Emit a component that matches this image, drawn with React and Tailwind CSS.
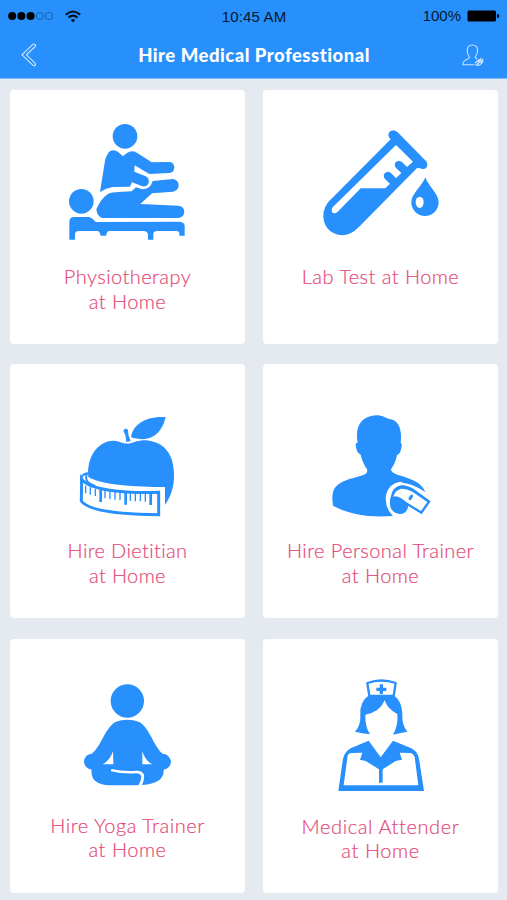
import React from "react";

function PhysioIcon() {
  return (
    <svg width="145" height="140" viewBox="0 0 435 420" fill="#2890fc">
      <circle cx="210" cy="79" r="37" />
      <circle cx="79" cy="274" r="37" />
      <path d="M158 132Q162 122 177 121Q186 121 204 139Q220 124 232 124Q240 124 248 130L290 157L343 156Q358 158 358 173Q357 187 343 189L283 192L239 166L238 185L272 199Q284 206 281 219Q277 231 262 229L231 217L225 230L173 231Q153 234 135 246L151 146Z" />
      <path d="M124 298Q138 264 160 251Q170 246 190 246L230 244L243 232L262 238Q286 238 293 213L354 207Q370 209 371 226Q370 242 354 245L291 250L256 282L371 287Q388 290 388 306Q387 322 370 324L143 324Q127 322 124 298Z" />
      <path d="M43 389V334Q44 321 58 321H101Q111 322 122 336L374 335Q388 336 389 348V377H373V368Q372 363 364 363H306Q297 363 295 371V389H279V371Q276 363 267 363H162Q156 364 153 377H137Q134 364 128 363H70Q61 364 60 371V389Z" />
    </svg>
  );
}

function LabIcon() {
  return (
    <svg width="140" height="125" viewBox="2 2 420 375" fill="#2890fc">
      <path d="M234 48Q234 34 249 33Q256 34 262 39L349 127Q354 136 348 145Q340 152 329 147L321 145L145 324Q121 348 96 348Q68 347 51 327Q38 309 39 285Q41 263 56 246L241 60Q234 54 234 48Z" />
      <path
        fill="#fff"
        d="M257 77L308 127L290 143L275 128Q264 121 256 129Q250 137 257 146L273 161L257 177L243 162Q232 153 223 162Q217 170 224 179L239 193L225 207H151L82 277Q72 286 65 278Q61 270 67 264Z"
      />
      <path d="M345 174C352 198 385 223 385 249A41 41 0 0 1 303 249C303 223 337 198 345 174Z" />
      <ellipse cx="328" cy="249" rx="12" ry="17" fill="#fff" />
    </svg>
  );
}

function DietIcon() {
  return (
    <svg width="125" height="120" viewBox="0 0 375 360" fill="#2890fc">
      <path d="M70 216C66 177 81 113 143 107C162 107 170 115 190 116C208 113 217 106 240 106C296 109 322 145 326 193C330 232 323 267 300 300V246C210 246 112 241 70 216Z" />
      <path d="M198 96C203 61 238 32 302 36C291 83 261 113 205 99Z" />
      <path d="M176 74Q183 68 189 75Q188 91 197 109L183 110Q184 91 176 81Z" />
      <path
        fill="none"
        stroke="#2890fc"
        strokeWidth="9"
        d="M50 222C70 255 175 265 281 262V329C175 328 70 318 49 288Z"
      />
      <path
        fill="none"
        stroke="#2890fc"
        strokeWidth="6"
        d="M49 235Q42 210 68 204Q61 210 65 226Q72 238 91 243"
      />
      <path
        fill="none"
        stroke="#2890fc"
        strokeWidth="8"
        d="M107 254V291M182 261V299M257 264V300"
      />
      <path
        fill="none"
        stroke="#2890fc"
        strokeWidth="4"
        d="M62 242V265M76 247V269M91 252V273M120 257V280M135 258V283M150 259V284M165 261V286M196 262V288M211 263V289M226 263V289M241 263V290"
      />
    </svg>
  );
}

function TrainerIcon() {
  return (
    <svg width="120" height="120" viewBox="0 0 360 360" fill="#2890fc">
      <path d="M110 113C101 66 119 33 167 31C184 31 191 38 205 42C231 43 244 70 239 113Q244 115 241 128Q238 147 228 150C224 171 217 182 210 193Q210 203 229 209C265 220 303 230 313 262L238 230Q203 235 195 270Q190 308 216 333C140 339 79 326 36 302Q31 269 38 255C56 222 104 221 132 208Q141 202 138 193C129 179 123 166 119 149Q107 145 104 121Q103 112 110 113Z" />
      <path
        d="M313 262Q280 238 248 234C220 231 198 253 199 285Q201 315 220 334L299 334L333 291Z"
        fill="#fff"
      />
      <path d="M209 277Q213 244 244 240Q257 241 274 249L329 289L302 328L262 303Q258 327 236 327Q209 323 207 299Q206 285 209 277Z" />
      <path
        fill="#fff"
        d="M217 275Q228 270 243 281L259 293L300 318L319 291L274 260Q255 250 240 251Q222 256 217 275Z"
      />
      <path
        fill="none"
        stroke="#2890fc"
        strokeWidth="9"
        strokeLinecap="round"
        d="M272 273L267 281"
      />
    </svg>
  );
}

function YogaIcon() {
  return (
    <svg width="115" height="120" viewBox="0 0 345 360" fill="#2890fc">
      <circle cx="172" cy="78" r="50" />
      <path d="M136 141Q172 127 208 141C239 159 251 214 278 236Q297 236 303 259Q302 280 281 284Q284 326 216 330Q224 313 222 299Q217 287 201 287Q160 290 124 282L123 289Q160 298 198 295Q211 295 214 304Q215 316 205 331H119C82 330 61 315 65 284Q44 281 42 260Q44 238 65 236C93 216 104 160 136 141Z" />
      <path
        fill="#fff"
        d="M129 229Q120 256 98 268H130ZM217 229V268H247Q225 257 217 229Z"
      />
    </svg>
  );
}

function NurseIcon() {
  return (
    <svg width="110" height="130" viewBox="2 0 330 390" fill="#2890fc">
      <path d="M129 77Q103 95 105 133Q107 168 89 185Q108 190 134 193Q119 171 120 134Q163 127 178 91Q188 119 216 132Q219 167 203 194Q222 190 246 185Q229 165 231 132Q230 94 207 77Z" />
      <path
        fill="#fff"
        stroke="#2890fc"
        strokeWidth="7"
        strokeLinejoin="round"
        d="M126 39Q168 24 211 39L205 78H132Z"
      />
      <path d="M163 43H173V53H183V63H173V72H163V63H153V53H163Z" />
      <path d="M130 212L166 262L203 212L258 235Q278 245 281 266L296 363H39L53 266Q58 245 76 235Z" />
      <path
        fill="#fff"
        d="M67 256Q71 248 82 249L111 248L104 269L121 273L161 298V338H172V298L211 273L230 269L223 248L253 249Q263 249 268 261L279 346H55Z"
      />
    </svg>
  );
}

const services = [
  { lines: ["Physiotherapy", "at Home"], icon: <PhysioIcon />, pad: "pt-5", label: "tracking-[0.43px]" },
  { lines: ["Lab Test at Home"], icon: <LabIcon />, pad: "pt-[30px]", label: "tracking-[0.45px]" },
  { lines: ["Hire Dietitian", "at Home"], icon: <DietIcon />, pad: "pt-[41px]", label: "tracking-[0.35px]" },
  { lines: ["Hire Personal Trainer", "at Home"], icon: <TrainerIcon />, pad: "pt-[41px]", label: "tracking-[0.42px]" },
  { lines: ["Hire Yoga Trainer", "at Home"], icon: <YogaIcon />, pad: "pt-9", label: "tracking-[0.55px]" },
  { lines: ["Medical Attender", "at Home"], icon: <NurseIcon />, pad: "pt-[31px]", label: "pt-px tracking-[0.6px]" },
];

function StatusBar() {
  return (
    <div className="grid h-8 grid-cols-3 items-center pl-2 pr-[7px] text-[15px] text-[#06182c]">
      <div className="flex items-center gap-[11px]">
        <svg width="46" height="10" viewBox="0 0 46 10">
          <circle cx="4.2" cy="5" r="4" fill="#000" />
          <circle cx="13.4" cy="5" r="4" fill="#000" />
          <circle cx="22.6" cy="5" r="4" fill="#000" />
          <circle cx="31.8" cy="5" r="3.6" fill="none" stroke="#145290" strokeWidth="0.8" />
          <circle cx="41" cy="5" r="3.6" fill="none" stroke="#145290" strokeWidth="0.8" />
        </svg>
        <svg width="16" height="13" viewBox="0 0 16 13" fill="none" stroke="#04101e" strokeWidth="2">
          <path d="M0.8 4.7Q8-1.8 15.2 4.7" />
          <path d="M3.5 7.6Q8 3.6 12.5 7.6" />
          <path d="M5.8 9.9Q8 8 10.2 9.9L8 12.4Z" fill="#04101e" stroke="none" />
        </svg>
      </div>
      <div className="pt-0.5 text-center font-['Liberation_Sans'] tracking-[0.15px]">10:45 AM</div>
      <div className="flex items-center justify-end gap-[6px]">
        <span className="font-['Liberation_Sans']">100%</span>
        <svg width="33" height="12" viewBox="0 0 33 12">
          <rect x="0.5" y="0.5" width="28.5" height="11" rx="1.5" fill="#000" />
          <path d="M30 3.8Q32.5 4.5 32.5 6T30 8.2Z" fill="#000" />
        </svg>
      </div>
    </div>
  );
}

function Header() {
  return (
    <header className="h-[79px] border-b border-[#7dbbfb] bg-[#2890fc]">
      <StatusBar />
      <div className="flex h-[46px] items-center justify-between pl-[21px] pr-[23px]">
        <svg width="16" height="24" viewBox="0 0 16 24" fill="none" stroke="#d3e8ff" strokeWidth="1.1">
          <path d="M11.8 1.4Q13.2 0.5 14.2 1.7Q14.9 2.7 14 3.6L5.5 11.8L14 20.1Q15 21.2 14 22.3Q12.9 23.2 11.8 22.2L1 11.8Z" />
        </svg>
        <h1 className="pl-[9px] pt-0.5 text-[18.5px] font-black tracking-[0.5px] text-white">
          Hire Medical Professtional
        </h1>
        <svg width="22" height="23" viewBox="0 0 22 23" fill="none" stroke="#c9e2ff" strokeWidth="1.1">
          <path d="M7.6 13.2C5.5 11 5.2 9.4 5.2 6.5C5.2 3 7.2 1 10.3 1S15.6 3 15.6 6.5C15.6 9.4 15.2 11 13.2 13.2Q13.7 14.3 15.4 14.9M7.6 13.2Q7.2 14.6 4.8 15.5C2 16.5 1 18 1 20.7H12.5" />
          <path
            d="M14 20.8L16.3 21.3Q19 20.8 20.9 17.2M13.5 18.6Q15.7 17 17 15.8M15 20.2L19.8 16.3M16.5 18.2L18.8 14.5M20.8 15.2L19.2 18.5"
            strokeWidth="1.3"
            strokeLinecap="round"
          />
        </svg>
      </div>
    </header>
  );
}

function ServiceCard({ service }) {
  return (
    <button className="flex h-[254px] flex-col items-center rounded bg-white">
      <div className={`h-[174px] shrink-0 ${service.pad}`}>{service.icon}</div>
      <div
        className={`text-center text-[20px] font-light leading-[24.5px] text-[#e54b78] [-webkit-text-stroke:0.2px] ${service.label}`}
      >
        {service.lines.map((line) => (
          <div key={line}>{line}</div>
        ))}
      </div>
    </button>
  );
}

export default function App() {
  return (
    <div className="min-h-[900px] bg-[#e5e9f0] font-['Lato',sans-serif]">
      <Header />
      <main className="grid grid-cols-[235px_235px] gap-x-[18px] gap-y-[20.25px] pl-[10px] pt-[11px]">
        {services.map((service) => (
          <ServiceCard key={service.lines[0]} service={service} />
        ))}
      </main>
    </div>
  );
}
